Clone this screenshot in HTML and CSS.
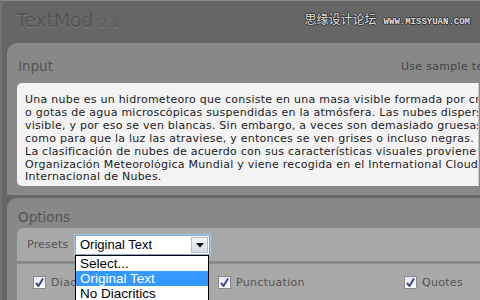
FILE: index.html
```html
<!DOCTYPE html>
<html lang="es">
<head>
  <meta charset="UTF-8">
  <title>TextMod 2.1</title>
  <link rel="stylesheet" href="styles.css">
</head>
<body>
  <div class="app">
    <header class="top">
      <h1 class="logo">TextMod <span class="version">2.1</span></h1>
      <div class="watermark"><span class="wm-cn">思缘设计论坛</span> <span class="wm-url">WWW.MISSYUAN.COM</span></div>
    </header>

    <section class="panel panel-input">
      <div class="panel-head">
        <h2>Input</h2>
        <a class="sample">Use sample text</a>
      </div>
      <div class="textbox">
        Una nube es un hidrometeoro que consiste en una masa visible formada por cristales de hielo<br>
        o gotas de agua microscópicas suspendidas en la atmósfera. Las nubes dispersan toda la luz<br>
        visible, y por eso se ven blancas. Sin embargo, a veces son demasiado gruesas<br>
        como para que la luz las atraviese, y entonces se ven grises o incluso negras.<br>
        La clasificación de nubes de acuerdo con sus características visuales proviene de la<br>
        Organización Meteorológica Mundial y viene recogida en el International Cloud Atlas, o Atlas<br>
        Internacional de Nubes.
      </div>
    </section>

    <section class="panel panel-options">
      <div class="panel-head">
        <h2>Options</h2>
      </div>
      <div class="presets">
        <span class="presets-label">Presets</span>
        <div class="dropdown">
          <div class="dropdown-value">
            Original Text
            <span class="dropdown-btn">
              <svg width="8" height="5" viewBox="0 0 8 5"><path d="M0 0h8L4 4.5z" fill="#000"/></svg>
            </span>
          </div>
          <ul class="dropdown-list">
            <li>Select...</li>
            <li class="active">Original Text</li>
            <li>No Diacritics</li>
          </ul>
        </div>
      </div>
      <div class="checks">
        <label class="check"><span class="box"><svg width="9" height="9" viewBox="0 0 9 9"><path d="M1 5l2.5 3L8 0.5" fill="none" stroke="#3b4c8c" stroke-width="2"/></svg></span>Diacritics</label>
        <label class="check"><span class="box"><svg width="9" height="9" viewBox="0 0 9 9"><path d="M1 5l2.5 3L8 0.5" fill="none" stroke="#3b4c8c" stroke-width="2"/></svg></span>Punctuation</label>
        <label class="check"><span class="box"><svg width="9" height="9" viewBox="0 0 9 9"><path d="M1 5l2.5 3L8 0.5" fill="none" stroke="#3b4c8c" stroke-width="2"/></svg></span>Quotes</label>
      </div>
    </section>
  </div>
</body>
</html>
```

FILE: styles.css
```css
html, body { margin: 0; height: 100%; }
body {
  background: #666;
  font-family: "DejaVu Sans", Verdana, sans-serif;
  overflow: hidden;
}
.app {
  border-top: 1px solid #8a8a8a;
  border-left: 2px solid #727272;
  height: 100%;
  position: relative;
}
.top { height: 42px; position: relative; }
.logo {
  margin: 0;
  padding: 8px 0 0 14px;
  font-size: 19px;
  font-weight: normal;
  color: #555;
  text-shadow: 0 1px 0 #7a7a7a;
  letter-spacing: -0.2px;
}
.version { font-size: 13px; color: #575757; letter-spacing: 0; }
.watermark {
  position: absolute;
  top: 8px;
  right: 10px;
  color: #ddd;
  text-shadow: -1px 0 #333, 1px 0 #333, 0 -1px #333, 0 1px #333;
}
.wm-cn { font-family: "Noto Sans CJK SC", sans-serif; font-size: 12px; }
.wm-url { font-family: "Liberation Mono", monospace; font-size: 9px; font-weight: bold; margin-left: 2px; }

.panel {
  margin-left: 5px;
  width: 620px;
  background: #888;
  border-top-left-radius: 10px;
  padding: 9px 0 9px 10px;
}
.panel-input { height: 134px; }
.panel-options { margin-top: 3px; height: 200px; }
.panel-head {
  display: flex;
  align-items: flex-end;
  height: 22px;
  margin-bottom: 9px;
}
.panel-head h2 {
  margin: 0 0 0 1px;
  font-size: 13.5px;
  font-weight: normal;
  color: #555;
}
.sample {
  margin-left: 348px;
  font-size: 11px;
  letter-spacing: 0.3px;
  color: #444;
  padding-bottom: 1px;
}
.textbox {
  width: 444px;
  height: 89px;
  background: #f3f3f3;
  border-right: 1px solid #ccc;
  border-radius: 5px 0 0 5px;
  padding: 11px 9px 3px 8px;
  font-size: 11px;
  letter-spacing: 0.25px;
  line-height: 12.9px;
  color: #222;
  white-space: nowrap;
  overflow: hidden;
}

.panel-options .panel-head { height: 18px; margin-bottom: 3px; }
.presets {
  display: flex;
  align-items: center;
  background: #a8a8a8;
  border-top-left-radius: 6px;
  height: 33px;
  padding-left: 10px;
  position: relative;
}
.presets-label { font-size: 11px; color: #555; width: 48px; letter-spacing: 0.2px; }
.dropdown { position: relative; z-index: 2; margin-top: 1px; }
.dropdown-value {
  width: 129px;
  height: 18px;
  border: 1px solid #7ea8d6;
  box-shadow: 0 0 0 1px #a9c6e6;
  background: #fff;
  font-family: "Liberation Sans", Arial, sans-serif;
  font-size: 13px;
  line-height: 18px;
  padding-left: 4px;
  position: relative;
}
.dropdown-btn {
  position: absolute;
  right: 1px;
  top: 1px;
  width: 17px;
  height: 16px;
  background: linear-gradient(#f2f4f8, #d6dbe4);
  border: 1px solid #b4bccb;
  box-sizing: border-box;
  display: flex;
  align-items: center;
  justify-content: center;
}
.dropdown-list {
  position: absolute;
  top: 20px;
  left: 0;
  width: 132px;
  margin: 0;
  padding: 0;
  list-style: none;
  background: #fff;
  border: 1px solid #000;
  font-family: "Liberation Sans", Arial, sans-serif;
  font-size: 13.5px;
}
.dropdown-list li { height: 15px; line-height: 15px; padding-left: 4px; color: #000; }
.dropdown-list li.active { background: #3399ff; color: #fff; }

.checks {
  display: grid;
  grid-template-columns: 185px 186px 100px;
  margin-top: 2px;
  border-top: 1px solid #8e8e8e;
  background: #a8a8a8;
  height: 36px;
  padding-left: 16px;
  align-items: center;
  border-bottom: 2px solid #b4b4b4;
}
.check { display: flex; align-items: center; font-size: 11px; letter-spacing: 0.3px; color: #555; }
.box {
  width: 11px;
  height: 11px;
  border: 1px solid #8a8a8a;
  background: linear-gradient(#e8e8ee, #fff);
  display: flex;
  align-items: center;
  justify-content: center;
  margin-right: 5px;
}
```
